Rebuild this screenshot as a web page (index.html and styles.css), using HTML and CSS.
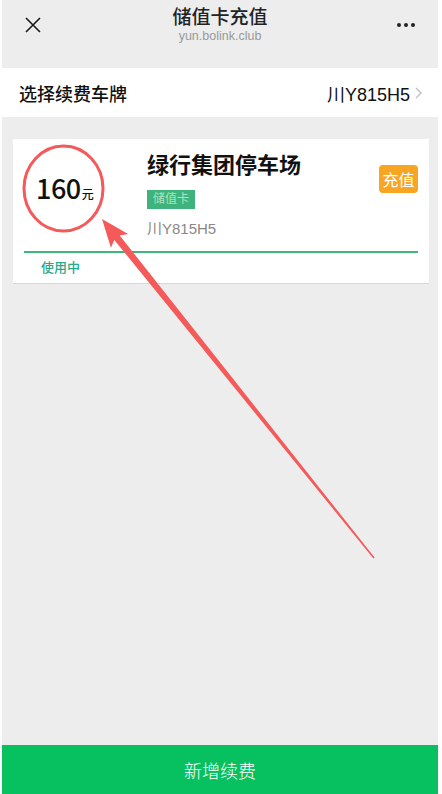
FILE: index.html
```html
<!DOCTYPE html>
<html lang="zh-CN">
<head>
    <meta charset="UTF-8">
    <meta name="viewport" content="width=device-width, initial-scale=1.0">
    <title>储值卡充值</title>
<link rel="stylesheet" href="styles.css">
</head>
<body>

<div class="page">
  <div class="screen">

    <header class="nav">
      <span class="nav-close">
        <svg width="16" height="16" viewBox="0 0 16 16"><path d="M1 1 L15 15 M15 1 L1 15" stroke="#1a1a1a" stroke-width="1.6" fill="none"/></svg>
      </span>
      <div class="nav-title">
        <h1>储值卡充值</h1>
        <span>yun.bolink.club</span>
      </div>
      <span class="nav-more"><i></i><i></i><i></i></span>
    </header>

    <div class="plate-row">
      <span class="plate-label">选择续费车牌</span>
      <span class="plate-value">川Y815H5
        <svg width="7" height="12" viewBox="0 0 7 12"><path d="M1 1 L6 6 L1 11" stroke="#c4c4c4" stroke-width="1.5" fill="none"/></svg>
      </span>
    </div>

    <div class="card">
      <div class="card-top">
        <div class="price">160<small>元</small></div>
        <div class="info">
          <h2>绿行集团停车场</h2>
          <span class="tag">储值卡</span>
          <p class="car">川Y815H5</p>
        </div>
        <button class="btn-charge">充值</button>
      </div>
      <div class="status">使用中</div>
    </div>

    <div class="spacer"></div>

    <button class="btn-add">新增续费</button>
  </div>

  <!-- annotation on top of the screenshot -->
  <svg class="mark" width="442" height="794" viewBox="0 0 442 794">
    <ellipse cx="63.5" cy="188.5" rx="39.5" ry="42.5" fill="none" stroke="#f45a5a" stroke-width="3"/>
    <polygon fill="#f45a5a" points="102,219 128.1,233.9 119.7,235.5 374.6,557.5 373.4,558.5 114.3,239.9 110.9,247.7"/>
  </svg>
</div>

</body>
</html>
```

FILE: styles.css
```css
* { box-sizing: border-box }

body {
  margin: 0;
  background: #fff;
  font-family: "Liberation Sans", "Noto Sans CJK SC", sans-serif;
  color: #111;
}

.page {
  position: relative;
  width: 442px;
  height: 794px;
}

.screen {
  width: 436px;
  height: 794px;
  margin-left: 2px;
  background: #ededed;
  display: flex;
  flex-direction: column;
}

/* nav bar */
.nav {
  height: 50px;
  display: flex;
  align-items: flex-start;
  position: relative;
}

.nav-close {
  margin: 17px 0 0 23px;
  width: 16px;
  height: 16px;
}

.nav-title {
  position: absolute;
  left: 0;
  right: 0;
  top: 7px;
  text-align: center;
}

.nav-title h1 {
  margin: 0;
  font-size: 19px;
  line-height: 22px;
  font-weight: 500;
  color: #222;
}

.nav-title span {
  display: block;
  font-size: 12.5px;
  line-height: 15px;
  color: #999;
}

.nav-more {
  margin: 23px 0 0 auto;
  margin-right: 23px;
  display: flex;
  gap: 3px;
}

.nav-more i {
  width: 4px;
  height: 4px;
  border-radius: 50%;
  background: #222;
}

/* plate row */
.plate-row {
  margin-top: 18px;
  height: 49px;
  background: #fff;
  display: flex;
  align-items: center;
  justify-content: space-between;
  padding: 0 17px;
}

.plate-label {
  font-size: 18px;
  font-weight: 500;
}

.plate-value {
  font-size: 18px;
  display: flex;
  align-items: center;
  gap: 5px;
  margin-right: -1px;
}

/* card */
.card {
  margin: 22px 9px 0 11px;
  height: 145px;
  background: #fff;
  border-bottom: 1px solid #d8d8d8;
  padding: 0 11px;
}

.card-top {
  display: flex;
  height: 114px;
  border-bottom: 2px solid #3cb878;
}

.price {
  width: 123px;
  padding: 29px 0 0 12px;
  font-family: "Noto Sans CJK SC", sans-serif;
  font-size: 27px;
  font-weight: 500;
  letter-spacing: -0.5px;
  color: #111;
}

.price small {
  font-size: 12px;
  letter-spacing: 0;
  margin-left: 1px;
}

.info {
  flex: 1;
  padding-top: 13px;
}

.info h2 {
  margin: 0;
  font-size: 22px;
  line-height: 28px;
  font-weight: bold;
  color: #111;
}

.tag {
  display: inline-block;
  margin-top: 10px;
  height: 19px;
  line-height: 19px;
  padding: 0 6px;
  font-size: 12px;
  background: #3eb37b;
  color: #a9e3c3;
}

.car {
  margin: 9px 0 0;
  font-size: 15px;
  line-height: 22px;
  color: #888;
}

.btn-charge {
  margin-top: 26px;
  width: 39px;
  height: 28px;
  padding: 0;
  border: 0;
  border-radius: 4px;
  background: #f6a623;
  color: #fff;
  font-family: "Noto Sans CJK SC", sans-serif;
  font-size: 16px;
}

.status {
  padding-left: 17px;
  line-height: 29px;
  font-size: 13px;
  font-weight: 500;
  color: #27a98d;
}

.spacer { flex: 1 }

.btn-add {
  height: 49px;
  border: 0;
  background: #07c160;
  color: #fff;
  font-family: "Noto Sans CJK SC", sans-serif;
  font-size: 18px;
  font-weight: 300;
}

.mark {
  position: absolute;
  left: 0;
  top: 0;
  pointer-events: none;
}
```
